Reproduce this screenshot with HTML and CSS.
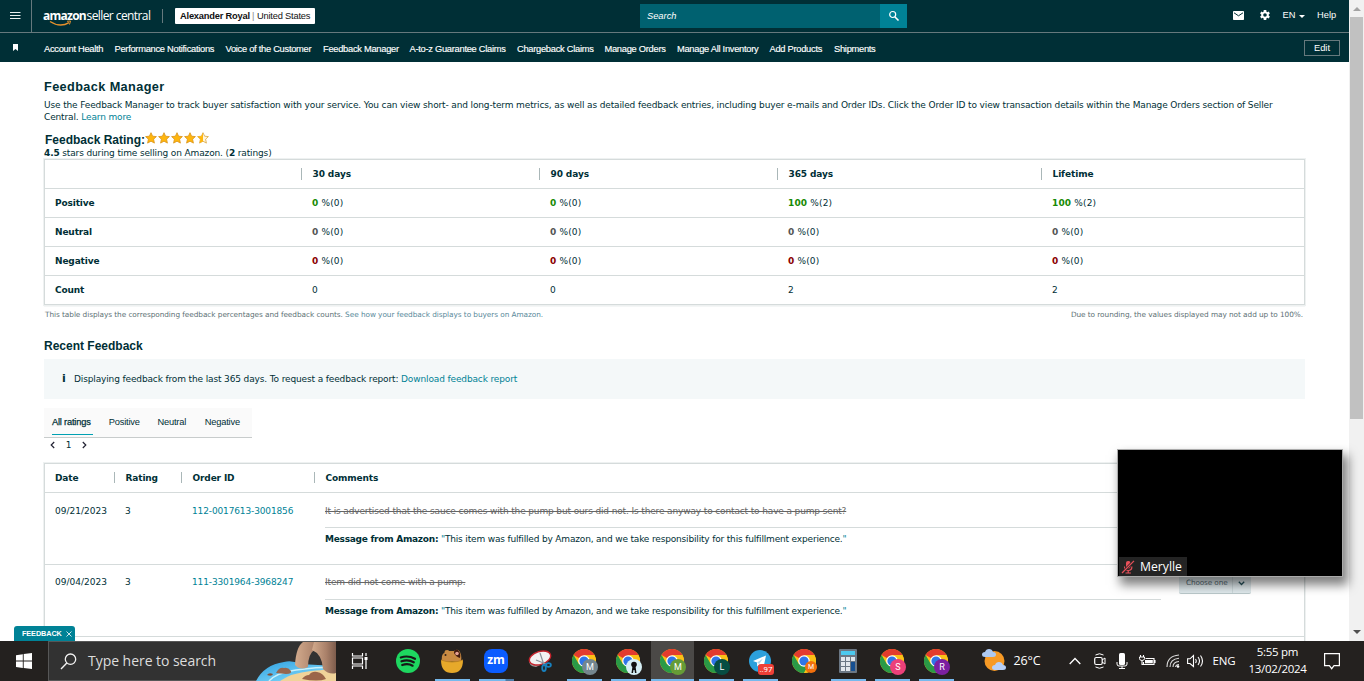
FILE: index.html
```html
<!DOCTYPE html>
<html lang="en">
<head>
<meta charset="utf-8">
<title>Feedback Manager</title>
<link rel="stylesheet" href="styles.css">
</head>
<body>
<svg class="defs" width="0" height="0">
  <defs>
    <symbol id="chrome" viewBox="0 0 24 24">
      <circle cx="12" cy="12" r="12" fill="#fbc116"/>
      <path d="M12 12L1.6 6A12 12 0 0 1 22.4 6z" fill="#e33b2e"/>
      <path d="M1.6 6A12 12 0 0 0 12 24L17.2 15H6.8z" fill="#2a9a46"/>
      <path d="M12 6h10.4A12 12 0 0 1 12 24l5.2-9z" fill="#fbc116"/>
      <circle cx="12" cy="12" r="5.8" fill="#fff"/>
      <circle cx="12" cy="12" r="4.6" fill="#2f75e8"/>
    </symbol>
    <symbol id="star" viewBox="0 0 12 12">
      <path d="M6 .7l1.6 3.5 3.8.4-2.8 2.6.8 3.9L6 9.2l-3.4 1.9.8-3.9L.6 4.6l3.8-.4z" fill="#ffb60d" stroke="#d9931a" stroke-width=".8"/>
    </symbol>
  </defs>
</svg>
<div class="browser">
  <div class="page">
    <header class="topbar">
      <div class="burger"><svg width="11" height="9" viewBox="0 0 11 9"><path d="M0 1.5h10.5M0 4.5h10.5M0 7.500h10.5" stroke="#e8eeee"/></svg></div>
      <div class="brand">
        <span class="amazon">amazon</span><span class="sc">seller central</span>
        <svg class="smile" width="24" height="7" viewBox="0 0 24 7"><path d="M1 1.500Q11 8 20 2.600" fill="none" stroke="#e6912c" stroke-width="1.400"/><path d="M18 1.300l3.500-.3-1 3.500" fill="none" stroke="#e6912c"/></svg>
      </div>
      <div class="account"><b>Alexander Royal</b><i>|</i><span>United States</span></div>
      <div class="search"><span>Search</span><div class="go"><svg width="12" height="12" viewBox="0 0 12 12"><circle cx="4.700" cy="4.500" r="3" fill="none" stroke="#fff" stroke-width="1.200"/><path d="M7 7l3.500 3.500" stroke="#fff" stroke-width="1.600"/></svg></div></div>
      <div class="tools">
        <svg class="mail" width="11" height="9" viewBox="0 0 11 9"><rect width="11" height="9" rx=".8" fill="#fff"/><path d="M1 1.800l4.500 3 4.500-3" fill="none" stroke="#002f36" stroke-width="1"/></svg>
        <svg class="gear" width="12" height="12" viewBox="0 0 24 24"><path fill="#fff" d="M19.400 13a7.500 7.500 0 0 0 0-2l2.300-1.800-2.200-4-2.800 1.100a7 7 0 0 0-1.700-1L14.500 2h-5L9 5.300a7 7 0 0 0-1.700 1L4.500 5.200l-2.200 4L4.600 11a7.500 7.500 0 0 0 0 2l-2.300 1.800 2.200 4 2.800-1.100a7 7 0 0 0 1.700 1l.5 3.300h5l.5-3.300a7 7 0 0 0 1.700-1l2.800 1.100 2.200-4zM12 15.600a3.600 3.600 0 1 1 0-7.200 3.600 3.600 0 0 1 0 7.200z"/></svg>
        <span class="lang">EN</span><span class="caret"></span><span class="help">Help</span>
      </div>
    </header>
    <nav class="nav">
      <svg class="mark" width="5" height="7" viewBox="0 0 5 7"><path d="M0 0h5v7L2.500 5 0 7z" fill="#fff"/></svg>
      <a>Account Health</a><a>Performance Notifications</a><a>Voice of the Customer</a><a>Feedback Manager</a><a>A-to-z Guarantee Claims</a><a>Chargeback Claims</a><a>Manage Orders</a><a>Manage All Inventory</a><a>Add Products</a><a>Shipments</a>
      <button class="edit">Edit</button>
    </nav>
    <main class="main">
      <h1>Feedback Manager</h1>
      <p class="intro">Use the Feedback Manager to track buyer satisfaction with your service. You can view short- and long-term metrics, as well as detailed feedback entries, including buyer e-mails and Order IDs. Click the Order ID to view transaction details within the Manage Orders section of Seller<br>Central. <a>Learn more</a></p>
      <div class="rating">
        <h2>Feedback Rating:</h2>
        <div class="stars">
          <svg><use href="#star"/></svg><svg><use href="#star"/></svg><svg><use href="#star"/></svg><svg><use href="#star"/></svg>
          <svg viewBox="0 0 12 12"><path d="M6 .7l1.600 3.500 3.800.4-2.800 2.600.8 3.900L6 9.200l-3.400 1.900.8-3.900L.6 4.600l3.800-.4z" fill="#fff6df" stroke="#d9a53c" stroke-width=".8"/><path d="M6 .7v8.500l-3.400 1.900.8-3.900L.6 4.600l3.800-.4z" fill="#ffb60d"/></svg>
        </div>
      </div>
      <p class="summary"><b>4.5</b> stars during time selling on Amazon. (<b>2</b> ratings)</p>
      <section class="stats">
        <div class="row head"><span></span><span>30 days</span><span>90 days</span><span>365 days</span><span>Lifetime</span></div>
        <div class="row pos"><b>Positive</b><span><em>0</em> %(0)</span><span><em>0</em> %(0)</span><span><em>100</em> %(2)</span><span><em>100</em> %(2)</span></div>
        <div class="row neu"><b>Neutral</b><span><em>0</em> %(0)</span><span><em>0</em> %(0)</span><span><em>0</em> %(0)</span><span><em>0</em> %(0)</span></div>
        <div class="row neg"><b>Negative</b><span><em>0</em> %(0)</span><span><em>0</em> %(0)</span><span><em>0</em> %(0)</span><span><em>0</em> %(0)</span></div>
        <div class="row"><b>Count</b><span>0</span><span>0</span><span>2</span><span>2</span></div>
      </section>
      <div class="notes"><span>This table displays the corresponding feedback percentages and feedback counts. <a>See how your feedback displays to buyers on Amazon.</a></span><span>Due to rounding, the values displayed may not add up to 100%.</span></div>
      <h2 class="recent">Recent Feedback</h2>
      <div class="info"><b>i</b><span>Displaying feedback from the last 365 days. To request a feedback report: <a>Download feedback report</a></span></div>
      <div class="tabs"><span class="on">All ratings</span><span>Positive</span><span>Neutral</span><span>Negative</span></div>
      <div class="pager">
        <svg width="5" height="8" viewBox="0 0 5 8"><path d="M4.200 1L1.200 4l3 3" fill="none" stroke="#223" stroke-width="1.200"/></svg><span>1</span><svg width="5" height="8" viewBox="0 0 5 8"><path d="M.8 1l3 3-3 3" fill="none" stroke="#223" stroke-width="1.200"/></svg>
      </div>
      <section class="entries">
        <div class="erow ehead"><span>Date</span><span>Rating</span><span>Order ID</span><span>Comments</span></div>
        <div class="erow"><span class="date">09/21/2023</span><span>3</span><a>112-0017613-3001856</a>
          <div class="comment"><s>It is advertised that the sauce comes with the pump but ours did not. Is there anyway to contact to have a pump sent?</s><p><b>Message from Amazon:</b> <q>"</q>This item was fulfilled by Amazon, and we take responsibility for this fulfillment experience.<q>"</q></p></div></div>
        <div class="erow second"><span class="date">09/04/2023</span><span>3</span><a>111-3301964-3968247</a>
          <div class="comment"><s>Item did not come with a pump.</s><p><b>Message from Amazon:</b> <q>"</q>This item was fulfilled by Amazon, and we take responsibility for this fulfillment experience.<q>"</q></p></div>
          <div class="choose"><span>Choose one</span><i><svg width="7" height="5" viewBox="0 0 7 5"><path d="M.8.8l2.700 2.700L6.200.8" fill="none" stroke="#24505a" stroke-width="1.300"/></svg></i></div></div>
        <div class="erow"></div>
      </section>
    </main>
    <div class="feedback-tab">FEEDBACK<svg width="6" height="6" viewBox="0 0 6 6"><path d="M.5.5l5 5M5.500.5l-5 5" stroke="#fff" stroke-width=".8"/></svg></div>
  </div>
  <div class="scroll"><i class="up"></i><div class="thumb"></div><i class="down"></i></div>
</div>
<div class="video"><div class="who"><svg width="14" height="14" viewBox="0 0 14 14"><rect x="5" y="1" width="4.500" height="7.500" rx="2" fill="#e8505a"/><path d="M3.500 6.500q0 4 3.700 4t3.700-4M7.200 10.500V13M4.500 13h5.400" fill="none" stroke="#e8505a" stroke-width="1.200"/><path d="M1 13L13 .8" stroke="#262626" stroke-width="2.600"/><path d="M1 13L13 .8" stroke="#e8505a" stroke-width="1.200"/></svg><span>Merylle</span></div></div>
<footer class="taskbar">
  <div class="start"><svg width="16" height="16" viewBox="0 0 16 16"><path d="M0 2.200l6.800-1v6.400H0zM7.700 1L16 0v7.600H7.700zM0 8.500h6.800v6.400l-6.800-1zM7.700 8.500H16V16l-8.300-1.100z" fill="#fff"/></svg></div>
  <div class="find">
    <svg width="17" height="17" viewBox="0 0 17 17"><circle cx="10.500" cy="6.200" r="5.200" fill="none" stroke="#f2f2f2" stroke-width="1.300"/><path d="M6.800 10L1 16" stroke="#f2f2f2" stroke-width="1.400"/></svg>
    <span>Type here to search</span>
    <svg class="beach" width="80" height="39" viewBox="0 0 80 39">
      <defs>
        <linearGradient id="sea" x1="0" y1="0" x2="1" y2="1"><stop offset="0" stop-color="#2e9fdf"/><stop offset=".6" stop-color="#68c8f2"/><stop offset="1" stop-color="#c5edf8"/></linearGradient>
        <linearGradient id="rock" x1="0" y1="0" x2="1" y2="0"><stop offset="0" stop-color="#d3ab8d"/><stop offset=".6" stop-color="#a98069"/><stop offset="1" stop-color="#7d5c4c"/></linearGradient>
      </defs>
      <path d="M0 39Q8 23 28 20Q36 18 44 22L80 24V39z" fill="url(#sea)"/>
      <path d="M13 39Q20 31 40 28T80 25" fill="none" stroke="#c9f1fb" stroke-width="1.500"/>
      <path d="M24 39Q35 31 55 29T80 27V39z" fill="#f0d399"/>
      <path d="M39 23Q40 5 47 0H74Q64 4 60 7Q52 11 52 25Q44 29 39 23z" fill="url(#rock)"/>
      <path d="M58 0H80V31Q73 33 67 27Q66 12 56 8z" fill="url(#rock)"/>
      <path d="M20 31q3-6 8-5 4-1 7 3 1 3-5 3z" fill="#96664f"/><path d="M11 33q2-3 6-1-1 3-6 1z" fill="#80513d"/>
      <path d="M46 37q3-4 7-4 3-4 8-3 6 1 9 7-8 3-24 0z" fill="#9b6549"/>
    </svg>
  </div>
  <div class="apps">
    <div class="app tv"><svg width="17" height="16" viewBox="0 0 17 16"><path d="M1.500 0v3h10V0M1.500 16v-3h10v3M1.500 5h10v6h-10zM15 0v3M15 7v9" fill="none" stroke="#fff" stroke-width="1.200"/><rect x="13.500" y="4" width="3" height="3" fill="#fff"/></svg></div>
    <div class="app"><svg width="24" height="24" viewBox="0 0 24 24"><circle cx="12" cy="12" r="12" fill="#1ed760"/><path d="M4.800 8.500Q12 6 19 9.800M5.500 12.300Q12 10 17.800 13.300M6.200 16Q12 14 16.600 16.700" fill="none" stroke="#171717" stroke-width="2.200" stroke-linecap="round"/></svg></div>
    <div class="app run"><svg width="24" height="24" viewBox="0 0 24 24"><path d="M2 12Q1 5 4.500 4 4 1 7 1q2 0 2 1h5q4-3 6 1 2 4 1 9z" fill="#c98a42"/><path d="M14 4q0-4 4-3 3 3 2 8-4-1-6-5z" fill="#42190f"/><circle cx="17" cy="4.500" r="1.800" fill="#e7a295"/><circle cx="5.500" cy="6" r="1" fill="#302018"/><path d="M1 11q11 3 22 0 0 13-11 13T1 11z" fill="#e7a92a"/><path d="M1 11q11 4 22 0" fill="none" stroke="#bf8424"/></svg></div>
    <div class="app run two"><svg width="24" height="24" viewBox="0 0 24 24"><rect width="24" height="24" rx="8" fill="#0b5cff"/></svg><span class="zm">zm</span></div>
    <div class="app"><svg width="24" height="24" viewBox="0 0 24 24"><path d="M1 10q-1 7 7 8l10-5L20 8z" fill="#9b9b9b"/><ellipse cx="12" cy="9" rx="11" ry="6.500" transform="rotate(-18 12 9)" fill="#f2f2f2" stroke="#c3232c" stroke-width="1.400"/><path d="M12 4l4 12M8 11l10 4" stroke="#8a929a" stroke-width="1.200"/><ellipse cx="16" cy="19" rx="1.800" ry="3" fill="none" stroke="#1880bd" stroke-width="1.800"/><ellipse cx="20.500" cy="16" rx="2.400" ry="1.800" fill="none" stroke="#1880bd" stroke-width="1.800"/></svg></div>
    <div class="app run"><svg width="24" height="24"><use href="#chrome"/></svg><span class="badge grey">M</span></div>
    <div class="app run"><svg width="24" height="24"><use href="#chrome"/></svg><span class="badge face"><svg width="10" height="12" viewBox="0 0 10 12"><circle cx="5" cy="3.500" r="2.800" fill="#111"/><path d="M2.500 12l1-7h3l1 7H6l-.5-3h-1L4 12z" fill="#111"/></svg></span></div>
    <div class="app run active"><svg width="24" height="24"><use href="#chrome"/></svg><span class="badge green">M</span></div>
    <div class="app run"><svg width="24" height="24"><use href="#chrome"/></svg><span class="badge dark">L</span></div>
    <div class="app run"><svg width="22" height="22" viewBox="0 0 22 22"><circle cx="11" cy="11" r="11" fill="#2ca0dc"/><path d="M4 11l13-5.500-2.500 12-4-3-2.300 2L8 12.500z" fill="#fff"/><path d="M8 12.500l6-4-3.800 5.500" fill="#b7d7eb"/></svg><span class="count">..97</span></div>
    <div class="app"><svg width="24" height="24"><use href="#chrome"/></svg><span class="badge orange">M</span></div>
    <div class="app run"><svg width="18" height="24" viewBox="0 0 18 24"><rect width="18" height="24" rx="1" fill="#6b7784"/><rect x="2" y="2" width="14" height="4" fill="#4cc9ee"/><path d="M2 8h4v4H2zM7 8h4v4H7zM12 8h4v4h-4zM2 13h4v4H2zM7 13h4v4H7zM2 18h4v4H2zM7 18h4v4H7z" fill="#e2e7ec"/><path d="M12 13h4v9h-4z" fill="#164f91"/></svg></div>
    <div class="app run"><svg width="24" height="24"><use href="#chrome"/></svg><span class="badge pink">S</span></div>
    <div class="app run"><svg width="24" height="24"><use href="#chrome"/></svg><span class="badge purple">R</span></div>
  </div>
  <div class="tray">
    <svg width="24" height="24" viewBox="0 0 24 24"><circle cx="12.500" cy="12" r="10" fill="#f79a25"/><path d="M3 8q-3 0-3-2.500T3 3q1-3 4-3t4 3q3 0 3 2.500T11 8z" fill="#adc9f2"/><path d="M13 21q-3 0-3-2.500T13 16q1-3 4-3t4 3q3 0 3 2.500T21 21z" fill="#b8d0f7"/></svg>
    <span class="temp">26°C</span>
    <svg class="chev" width="12" height="8" viewBox="0 0 12 8"><path d="M.7 7L6 1.500 11.300 7" fill="none" stroke="#fff" stroke-width="1.300"/></svg>
    <svg class="cam" width="12" height="16" viewBox="0 0 12 16"><rect x=".7" y="4.500" width="7.500" height="7" rx="1.500" fill="none" stroke="#fff" stroke-width="1.200"/><path d="M8 7l3-2v6L8 9M1.500 2q4-2.500 8 0M1.500 14q4 2.500 8 0" fill="none" stroke="#fff"/></svg>
    <svg class="mic" width="12" height="16" viewBox="0 0 12 16"><rect x="3" width="6" height="12" rx="1.500" fill="#fff"/><path d="M1 9v2q0 2 2 2h6q2 0 2-2V9M6 13v2.500M3 15.500h6" fill="none" stroke="#fff"/></svg>
    <svg class="bat" width="17" height="12" viewBox="0 0 17 12"><path d="M6.500 3.500H15v6H4.500V7M16 5v3M1.500 0v2M4.500 0v2M3 5.500v4h2" fill="none" stroke="#fff" stroke-width="1.100"/><path d="M.5 2h5v1.500q0 2-2.500 2t-2.500-2z" fill="none" stroke="#fff"/><rect x="6" y="5" width="7.800" height="3.300" fill="#fff"/></svg>
    <svg class="wifi" width="14" height="14" viewBox="0 0 14 14"><path d="M1 13Q1 2 13 1M4 13Q4 5 13 4.200M7 13q0-5 6-5.500M9.500 13q.5-2.500 3.500-2.500" fill="none" stroke="#ddd" stroke-width="1.100"/><circle cx="12" cy="12.500" r="1.300" fill="#fff"/></svg>
    <svg class="vol" width="17" height="14" viewBox="0 0 17 14"><path d="M.6 4.800H3L6.500 1.500v11L3 9.500H.6zM8.500 5q1.500 2 0 4M11 3q3 4 0 8M13.500 1.500q4 5.500 0 11" fill="none" stroke="#fff" stroke-width="1.100"/></svg>
    <span class="eng">ENG</span>
    <div class="clock"><span>5:55 pm</span><span>13/02/2024</span></div>
    <svg class="note" width="16" height="17" viewBox="0 0 16 17"><path d="M.6.7h14.800v12H10l-2.300 3-2.300-3H.6z" fill="none" stroke="#fff" stroke-width="1.200"/></svg>
  </div>
</footer>
</body>
</html>
```
FILE: styles.css
```css
* { box-sizing: border-box; }
body { margin: 0; width: 1364px; height: 681px; overflow: hidden; background: #fff; font: 9px/12px "DejaVu Sans", Verdana, sans-serif; color: #002f36; }
.defs { position: absolute; }
svg { display: block; flex: none; }
h1, h2, p { margin: 0; }
a { color: #008296; }
.browser { display: flex; height: 641px; overflow: hidden; }
.page { position: relative; width: 1349px; height: 641px; overflow: hidden; }
.topbar, .nav, .tabs { font-family: "Liberation Sans", Arial, sans-serif; }
.topbar { display: flex; align-items: center; height: 33px; background: #002f36; border-bottom: 1px solid #66797d; color: #fff; white-space: nowrap; }
.burger { width: 32px; height: 32px; border-right: 1px solid #66797d; padding: 11px 0 0 10px; }
.brand { position: relative; display: flex; align-items: center; width: 120px; height: 14px; margin: -1px 12px 0 11px; border-right: 1px solid #66797d; }
.amazon { font: bold 12px/14px "Open Sans", sans-serif; letter-spacing: -.75px; width: 43.5px; }
.sc { font: 12px/14px "Open Sans", sans-serif; letter-spacing: -.58px; }
.smile { position: absolute; left: 6px; top: 11px; }
.account { display: flex; width: 140px; height: 16px; background: #fff; color: #111; border-radius: 1px; padding-left: 5px; font-size: 9.3px; line-height: 16px; }
.account b { width: 71px; letter-spacing: -.2px; }
.account i { width: 6px; padding-left: 1px; font-style: normal; color: #888; }
.account span { letter-spacing: -.2px; }
.search { display: flex; justify-content: space-between; align-items: center; width: 267px; height: 24px; margin-left: 325px; background: #006170; padding-left: 7px; font-size: 9.3px; font-style: italic; }
.go { width: 27px; height: 24px; background: #008296; padding: 6px 0 0 8px; }
.tools { display: flex; align-items: center; margin-left: 326px; font-size: 9.3px; margin-top: -2px; }
.gear { margin-left: 14.5px; }
.lang { margin-left: 12px; width: 16.5px; }
.caret { border: 3px solid transparent; border-top-color: #fff; border-bottom: 0; margin-top: 2px; }
.help { margin-left: 12px; }
.nav { display: grid; grid-template-columns: 31px 70.5px 111px 97.5px 86.5px 107.5px 87.5px 72.5px 92.5px 64.5px 1fr 36px; align-items: center; height: 29px; padding: 0 9px 0 13px; background: #002f36; color: #fff; font-size: 9.3px; letter-spacing: -.27px; white-space: nowrap; }
.nav a { color: #fff; padding-top: 2px; -webkit-text-stroke: .15px; }
.edit { height: 16px; width: 36px; padding: 0; background: none; border: 1px solid #66797d; color: #fff; font: 9.3px/12px "Liberation Sans", sans-serif; }
.main { padding: 17px 44px 0; letter-spacing: -.135px; }
h1, h2 { font: bold 12.7px/16px "Liberation Sans", Arial, sans-serif; letter-spacing: 0; }
h1 { letter-spacing: .4px; }
.intro { height: 24px; margin-top: 4px; white-space: nowrap; }
.rating { display: flex; height: 16px; margin-top: 9px; }
.rating h2 { width: 101px; padding-left: 1px; font-size: 12px; white-space: nowrap; }
.stars { display: flex; gap: 1px; }
.stars svg { width: 12px; height: 12px; }
.summary { height: 11px; line-height: 11px; }
.stats, .entries { border: 1px solid #d5dbdb; box-shadow: 0 0 0 1px #eef1f1, 0 1px 1px #bfc9c9; width: 1261px; }
.stats { height: 146px; }
.row { display: grid; grid-template-columns: 256px 238px 238px 264px 1fr; height: 29px; border-bottom: 1px solid #d5dbdb; align-items: center; }
.row:last-child { border-bottom: 0; height: 28px; }
.row > * { padding-left: 11px; white-space: pre; }
.row > span { letter-spacing: .16px; }
.row > :first-child { padding-left: 10px; }
.head, .ehead { font-weight: bold; }
.row.head > span { letter-spacing: -.1px; }
.head span + span, .ehead span + span { border-left: 1px solid #aab7b8; padding-left: 10.5px; }
.row em { font-style: normal; font-weight: bold; }
.pos em { color: #188a04; } .neu em { color: #555; } .neg em { color: #8b0000; }
.notes { display: flex; justify-content: space-between; margin: 4px 2px 0 1px; font-size: 7.33px; line-height: 11px; letter-spacing: -.055px; color: #5c7074; }
.notes a { color: #58899a; }
.recent { margin-top: 18px; font-size: 12px; }
.info { display: flex; align-items: center; height: 40px; margin-top: 5px; background: #f4f8f9; padding-left: 18px; }
.info b { width: 12px; font-size: 11px; }
.tabs { display: flex; height: 30px; width: 208px; margin-top: 9px; padding-left: 8px; background: #fafafa; border-bottom: 1px solid #c8cccc; font-size: 9.3px; line-height: 28px; letter-spacing: -.2px; white-space: nowrap; }
.tabs span { width: 48px; }
.tabs span:nth-child(2) { width: 49.5px; }
.tabs .on { width: 42px; height: 27px; margin-right: 15.5px; border-bottom: 1px solid #00a1b3; -webkit-text-stroke: .25px; }
.pager { display: flex; align-items: center; height: 14px; padding-left: 6px; }
.pager span { width: 27px; text-align: center; }
.entries { margin-top: 11px; height: 190px; }
.erow { position: relative; display: grid; grid-template-columns: 69px 67px 133px 1fr; height: 72px; padding-top: 12px; border-bottom: 1px solid #d5dbdb; white-space: nowrap; }
.erow > * { padding-left: 11px; }
.erow > :first-child { padding-left: 10px; }
.erow .date { letter-spacing: 0; }
.second { padding-top: 11px; }
.second s { height: 24px; }
.ehead { height: 29px; padding-top: 8px; }
.ehead span { height: 11px; line-height: 12px; }
.comment s { display: block; width: 836px; height: 23px; color: #666; border-bottom: 1px solid #d5dbdb; }
.erow.second .comment s { height: 24px; }
.comment p { margin-top: 5px; letter-spacing: -.168px; }
.comment b { letter-spacing: -.26px; }
.comment q { quotes: none; color: #008296; }
.erow .choose { position: absolute; left: 1134px; top: 7px; display: flex; width: 72px; height: 22px; background: #e0eaed; border-bottom: 1px solid #bac8ca; border-radius: 2px; padding-left: 7px; font-size: 7.3px; line-height: 22px; color: #566b73; }
.choose span { width: 46px; }
.choose i { border-left: 1px solid #cdd9dc; padding: 9px 0 0 5px; }
.feedback-tab { position: absolute; left: 14px; top: 626px; display: flex; align-items: center; gap: 4px; width: 61px; height: 15px; padding-left: 8px; background: #008296; color: #fff; border-radius: 3px 3px 0 0; font: bold 7.3px/15px "Liberation Sans", sans-serif; letter-spacing: -.1px; }
.scroll { width: 15px; display: flex; flex-direction: column; align-items: center; background: #f1f1f1; }
.scroll .up { margin-top: 7px; border: 4px solid transparent; border-top: 0; border-bottom-color: #a3a3a3; }
.thumb { width: 13px; height: 402px; margin-top: 6px; background: #c1c1c1; }
.scroll .down { margin-top: auto; margin-bottom: 7px; border: 4px solid transparent; border-bottom: 0; border-top-color: #505050; }
.video { position: absolute; left: 1118px; top: 450px; width: 224px; height: 126px; background: #000; box-shadow: 0 0 0 1px #aaa, 4px 7px 10px 2px rgba(0,0,0,.5); }
.who { position: absolute; left: 1px; bottom: 0; display: flex; align-items: center; gap: 5px; width: 68px; height: 19px; padding-left: 2px; background: #242424; color: #fff; font: 12.2px/19px "Open Sans", sans-serif; }
.taskbar { display: flex; height: 40px; background: #24211f; color: #fff; font-family: "Open Sans", sans-serif; }
.start { width: 48px; padding: 12px 0 0 16px; }
.find { position: relative; display: flex; align-items: center; width: 288px; height: 40px; padding-left: 11px; background: #323232; border: 1px solid #575757; border-right: 0; font-size: 14px; color: #ddd; white-space: nowrap; }
.find span { margin-left: 11px; letter-spacing: -.04px; }
.beach { position: absolute; right: 0; top: 0; }
.apps { display: flex; width: 622px; }
.app { position: relative; width: 44px; height: 40px; display: flex; align-items: center; justify-content: center; }
.tv { width: 50px; padding-right: 3px; }
.run::after { content: ""; position: absolute; left: 5px; bottom: 0; width: 35px; height: 2px; background: #76b9ed; }
.active { background: linear-gradient(#4b4947, #4b4947) 1px 0 / 43px 40px no-repeat; }
.active::after { left: 1px; width: 43px; }
.two::after { background: linear-gradient(90deg, #76b9ed 26px, #4c7ba5 27px); }
.zm { position: absolute; font: bold 12px/24px "Open Sans", sans-serif; top: 7px; }
.badge { position: absolute; left: 20px; top: 18px; width: 16px; height: 16px; border-radius: 50%; font: 9px/16px Roboto, sans-serif; text-align: center; }
.grey { background: #74868f; } .face { background: #d6eff5; padding: 2px 3px; } .green { background: #669c36; } .dark { background: #064d43; } .pink { background: #ec4079; } .purple { background: #7b20a1; }
.orange { background: #f3700c; width: 12px; height: 12px; left: 23px; top: 20px; font-size: 7px; line-height: 12px; }
.count { position: absolute; left: 20px; top: 23px; width: 16px; height: 11px; background: #ee3f37; border-radius: 3px; font: 8px/11px Roboto, sans-serif; text-align: center; }
.tray { display: flex; align-items: center; flex: 1; padding-left: 23.5px; white-space: nowrap; }
.temp { width: 30px; margin-left: 8px; font-size: 12.5px; letter-spacing: -.1px; }
.chev { margin-left: 25px; } .cam { margin-left: 13px; } .mic { margin-left: 10px; } .bat { margin-left: 11px; } .wifi { margin-left: 10px; } .vol { margin-left: 7px; }
.eng { margin-left: 9px; width: 24px; font-size: 11.5px; letter-spacing: -.2px; }
.clock { display: flex; flex-direction: column; width: 70px; margin-left: 6px; font-size: 11.5px; line-height: 17.5px; text-align: center; letter-spacing: -.3px; margin-top: -2px; }
.note { margin-left: 11px; }
```
